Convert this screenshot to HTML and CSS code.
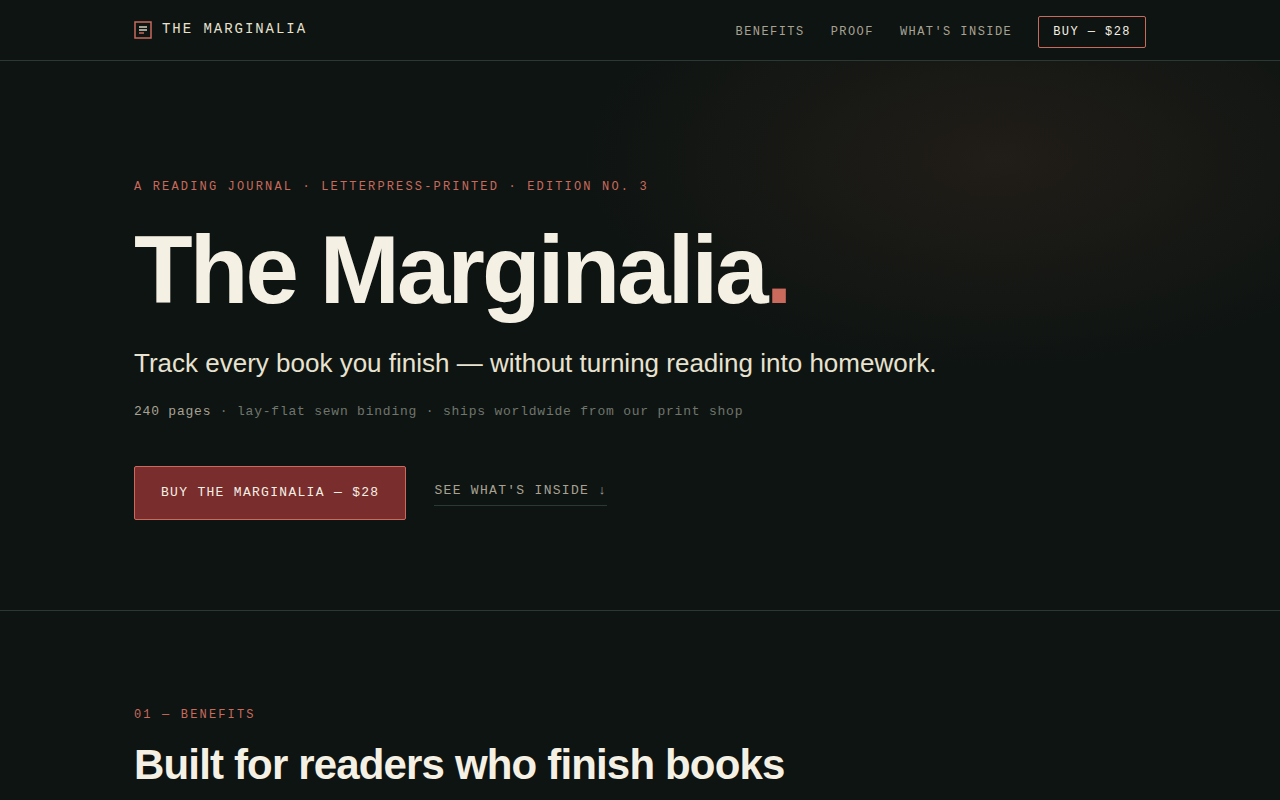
FILE: index.html
```html
<!doctype html>
<html lang="en">
<head>
<meta charset="utf-8">
<meta name="viewport" content="width=device-width, initial-scale=1">
<title>The Marginalia</title>
<link rel="stylesheet" href="styles.css">
</head>
<body>
<header class="site-header">
  <div class="wrap header-row">
    <a class="brand" href="#top">
      <svg width="18" height="18" viewBox="0 0 18 18" fill="none" stroke-width="1.5" aria-hidden="true">
        <rect x="1" y="1" width="16" height="16" stroke="#c96a5c"/>
        <path d="M5 6h8M5 9h8" stroke="#d6cfbf"/>
        <path d="M5 12h5" stroke="#c96a5c"/>
      </svg>
      <span>The Marginalia</span>
    </a>
    <nav class="nav">
      <a href="#benefits">Benefits</a>
      <a href="#proof">Proof</a>
      <a href="#inside">What's inside</a>
      <a class="nav-buy" href="#buy">Buy — $28</a>
    </nav>
  </div>
</header>
<main id="top">
  <section class="hero">
    <div class="wrap">
      <p class="eyebrow">A reading journal · Letterpress-printed · Edition No. 3</p>
      <h1>The Marginalia<span class="dot">.</span></h1>
      <p class="tagline">Track every book you finish — without turning reading into homework.</p>
      <p class="meta"><span class="pages">240 pages</span> · lay-flat sewn binding · ships worldwide from our print shop</p>
      <div class="actions">
        <a class="buy" href="#buy">Buy The Marginalia — $28</a>
        <a class="more" href="#inside">See what's inside ↓</a>
      </div>
    </div>
  </section>
  <section class="section" id="benefits">
    <div class="wrap">
      <p class="eyebrow">01 — Benefits</p>
      <h2>Built for readers who finish books</h2>
    </div>
  </section>
</main>
</body>
</html>
```
FILE: styles.css
```css
:root {
  --bg: #0e1412;
  --line: #2c3833;
  --cream: #f5f0e4;
  --text: #e8e2d0;
  --muted: #a8a294;
  --dim: #70766d;
  --accent: #c96a5c;
  --oxblood: #7a2d2d;
  --mono: "Liberation Mono", "Courier New", monospace;
}
* { box-sizing: border-box; }
body {
  margin: 0;
  background: var(--bg);
  color: var(--text);
  font-family: "Liberation Sans", Arial, sans-serif;
}
h1, h2, p { margin: 0; }
a { text-decoration: none; }
.wrap {
  max-width: 1060px;
  margin: 0 auto;
  padding: 0 24px;
}

/* header */
.site-header { border-bottom: 1px solid var(--line); }
.header-row {
  display: flex;
  justify-content: space-between;
  align-items: center;
  min-height: 60px;
}
.brand {
  display: flex;
  align-items: flex-start;
  gap: 10px;
  color: var(--text);
  font: 14px/16px var(--mono);
  letter-spacing: 0.14em;
  text-transform: uppercase;
}
.nav {
  display: flex;
  align-items: center;
  gap: 26px;
  padding-top: 4px;
  font: 12px/16px var(--mono);
  letter-spacing: 0.12em;
  text-transform: uppercase;
}
.nav a { color: var(--muted); }
.nav .nav-buy {
  padding: 7px 14px;
  border: 1px solid var(--accent);
  border-radius: 2px;
  color: var(--cream);
}

/* hero */
.hero {
  padding: 116px 0 90px;
  border-bottom: 1px solid var(--line);
  background: radial-gradient(ellipse 420px 210px at 78% 18%, rgba(201, 106, 72, 0.1), transparent);
}
.eyebrow {
  color: var(--accent);
  font: 12px/20px var(--mono);
  letter-spacing: 0.18em;
  text-transform: uppercase;
}
h1 {
  margin-top: 25px;
  color: var(--cream);
  font-size: 96px;
  line-height: 96px;
  letter-spacing: -0.03em;
}
.dot { color: var(--accent); }
.tagline {
  margin-top: 27px;
  font-size: 26px;
  line-height: 36px;
}
.meta {
  margin-top: 21px;
  color: var(--dim);
  font: 13px/20px var(--mono);
  letter-spacing: 0.06em;
}
.pages { color: var(--muted); }
.actions {
  display: flex;
  flex-wrap: wrap;
  align-items: center;
  gap: 28px;
  margin-top: 44px;
  font: 13px/20px var(--mono);
  letter-spacing: 0.1em;
  text-transform: uppercase;
}
.buy {
  padding: 16px 26px;
  border: 1px solid var(--accent);
  border-radius: 2px;
  background: var(--oxblood);
  color: var(--cream);
}
.more {
  padding-bottom: 3px;
  border-bottom: 1px solid var(--line);
  color: var(--muted);
  line-height: 22px;
}

/* sections */
.section { padding: 94px 0; }
h2 {
  margin-top: 16px;
  color: var(--cream);
  font-size: 42px;
  line-height: 48px;
  letter-spacing: -0.02em;
}
```
